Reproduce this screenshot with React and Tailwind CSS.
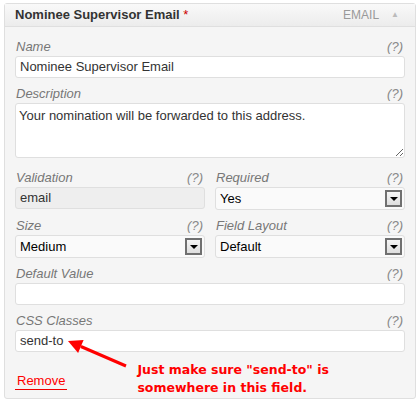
import React from 'react';

const font = { fontFamily: '"Liberation Sans", Arial, sans-serif' };

function Label({ text }) {
  return (
    <div className="flex h-4 items-center justify-between pl-px pr-[2px] text-[13px] italic leading-4 text-[#777]">
      <span>{text}</span>
      <span className="text-[#888]">(?)</span>
    </div>
  );
}

function TextField({ label, value, disabled }) {
  return (
    <div>
      <Label text={label} />
      <div
        className={`mt-px flex h-[22px] items-center rounded-[3px] border border-[#dfdfdf] px-[4px] text-[13px] text-[#333] ${
          disabled ? 'bg-[#eeeeee]' : 'bg-white'
        }`}
      >
        {value}
      </div>
    </div>
  );
}

function SelectField({ label, value }) {
  return (
    <div>
      <Label text={label} />
      <div className="mt-px flex h-[23px] items-center justify-between rounded-[3px] border border-[#dfdfdf] bg-[#fafafa] pl-[4px] pr-[2px] text-[13px] text-black">
        <span>{value}</span>
        <span className="flex h-[17px] w-[17px] items-center justify-center border-2 border-[#707070] bg-gradient-to-b from-[#f6f6f6] to-[#dedede]">
          <span className="mt-px h-0 w-0 border-x-[4px] border-t-[4px] border-x-transparent border-t-black" />
        </span>
      </div>
    </div>
  );
}

export default function App() {
  return (
    <div className="relative h-[403px] w-[420px] bg-white pl-[4px] pt-[3px]" style={font}>
      <div className="w-[412px] rounded-[3px] border border-[#dfdfdf] bg-[#f5f5f5]">
        {/* header */}
        <div className="flex h-[23px] items-center justify-between border-b border-[#dfdfdf] bg-gradient-to-b from-[#f9f9f9] to-[#ececec] pl-[10px] pr-[16px]">
          <div className="text-[13px] font-bold text-[#333]">
            Nominee Supervisor Email <span className="font-normal text-[#c00]">*</span>
          </div>
          <div className="flex items-center gap-[12px] text-[12px] text-[#999]">
            <span>EMAIL</span>
            <span className="text-[8px] text-[#bbb]">▲</span>
          </div>
        </div>

        {/* body */}
        <div className="px-[10px] pt-[12px] pb-px">
          <TextField label="Name" value="Nominee Supervisor Email" />

          <div className="mt-2">
            <Label text="Description" />
            <textarea
              readOnly
              value="Your nomination will be forwarded to this address."
              className="mt-px block h-[55px] w-full resize-y rounded-[3px] border border-[#dfdfdf] bg-white px-[3px] py-[4px] text-[13px] leading-4 text-[#333] outline-none"
              style={font}
            />
          </div>

          <div className="mt-[12px] grid grid-cols-2 gap-x-[10px] gap-y-2">
            <TextField label="Validation" value="email" disabled />
            <SelectField label="Required" value="Yes" />
            <SelectField label="Size" value="Medium" />
            <SelectField label="Field Layout" value="Default" />
          </div>

          <div className="mt-2">
            <TextField label="Default Value" value="" />
          </div>
          <div className="mt-2">
            <TextField label="CSS Classes" value="send-to" />
          </div>

          <div className="mt-[9px] flex items-start">
            <span className="mt-[12px] border-b border-[#e00] px-[2px] text-[13px] leading-4 text-[#f00]">
              Remove
            </span>
            <div
              className="ml-[70px] text-[12.5px] font-bold leading-[18px] text-[#f00]"
              style={{ fontFamily: '"DejaVu Sans", Verdana, sans-serif' }}
            >
              Just make sure "send-to" is
              <br />
              somewhere in this field.
            </div>
          </div>
        </div>
      </div>

      {/* annotation arrow */}
      <svg className="pointer-events-none absolute left-0 top-0" width="420" height="403">
        <line x1="126" y1="366" x2="80.9" y2="346.5" stroke="#f00" strokeWidth="3" />
        <polygon points="68,341 83.6,340.1 78.1,352.9" fill="#f00" />
      </svg>
    </div>
  );
}
